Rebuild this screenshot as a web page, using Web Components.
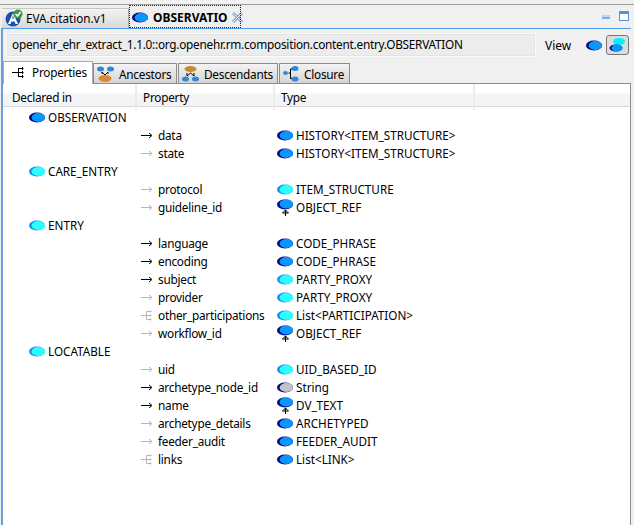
<!DOCTYPE html>
<html>
<head>
<meta charset="utf-8">
<title>OBSERVATION</title>
<style>
    html, body{
        margin: 0;
        height: 100%;
        overflow: hidden;
        background: #f0f0f0;
        color: #000;
        font-family: "Noto Sans", sans-serif;
        font-size: 11.8px;
        letter-spacing: -0.25px;
    }
</style>
</head>
<body>
<template id="icons">
    <svg data-icon="blue" width="17" height="13" viewBox="0 0 17 13"><ellipse cx="8" cy="6.500" rx="8" ry="5" fill="#000a80"/><ellipse cx="9.300" cy="6.500" rx="6.700" ry="4.400" fill="#0a96ff"/></svg>
    <svg data-icon="cyan" width="17" height="13" viewBox="0 0 17 13"><ellipse cx="8" cy="6.500" rx="8" ry="5" fill="#0a96ff"/><ellipse cx="9.300" cy="6.500" rx="6.700" ry="4.400" fill="#2dffff"/></svg>
    <svg data-icon="gray" width="17" height="13" viewBox="0 0 17 13"><ellipse cx="8" cy="6.500" rx="8" ry="5" fill="#000a80"/><ellipse cx="9.300" cy="6.500" rx="6.700" ry="4.400" fill="#c4c4c4"/></svg>
    <svg data-icon="ref" width="17" height="17" viewBox="0 0 17 17"><ellipse cx="8" cy="5.500" rx="8" ry="5" fill="#000a80"/><ellipse cx="9.300" cy="5" rx="6.700" ry="4.600" fill="#0a96ff"/><path d="M8.500 11v6M5.500 14l3-3 3 3z" stroke="#000" fill="none"/></svg>
    <svg data-icon="arrow" width="12" height="7" viewBox="0 0 12 7"><path d="M0 3.500h10M8 1l3 2.500L8 6" fill="none" stroke="currentColor"/></svg>
    <svg data-icon="tree" width="12" height="11" viewBox="0 0 12 11"><path d="M0 5.500h5.500M5.500 1.500v8M5.500 1.500h5M5.500 5.500h5M5.500 9.500h5M9.500 0.500v2M9.500 4.500v2M9.500 8.500v2" fill="none" stroke="currentColor"/></svg>
</template>

<editor-view>
    <editor-tab slot="tabs" label="EVA.citation.v1" icon="globe"></editor-tab>
    <editor-tab slot="tabs" label="OBSERVATIO" icon="blue" active></editor-tab>
    <path-bar>openehr_ehr_extract_1.1.0::org.openehr.rm.composition.content.entry.OBSERVATION</path-bar>
    <view-tabs>
        <view-tab label="Properties" icon="props" active></view-tab>
        <view-tab label="Ancestors" icon="anc"></view-tab>
        <view-tab label="Descendants" icon="desc"></view-tab>
        <view-tab label="Closure" icon="closure"></view-tab>
    </view-tabs>
    <prop-table>
        <class-row icon="blue">OBSERVATION</class-row>
        <prop-row name="data" arrow="dark" icon="blue">HISTORY&lt;ITEM_STRUCTURE&gt;</prop-row>
        <prop-row name="state" arrow="light" icon="blue">HISTORY&lt;ITEM_STRUCTURE&gt;</prop-row>
        <class-row icon="cyan">CARE_ENTRY</class-row>
        <prop-row name="protocol" arrow="light" icon="cyan">ITEM_STRUCTURE</prop-row>
        <prop-row name="guideline_id" arrow="light" icon="ref">OBJECT_REF</prop-row>
        <class-row icon="cyan">ENTRY</class-row>
        <prop-row name="language" arrow="dark" icon="blue">CODE_PHRASE</prop-row>
        <prop-row name="encoding" arrow="dark" icon="blue">CODE_PHRASE</prop-row>
        <prop-row name="subject" arrow="dark" icon="cyan">PARTY_PROXY</prop-row>
        <prop-row name="provider" arrow="light" icon="cyan">PARTY_PROXY</prop-row>
        <prop-row name="other_participations" arrow="tree" icon="cyan">List&lt;PARTICIPATION&gt;</prop-row>
        <prop-row name="workflow_id" arrow="light" icon="ref">OBJECT_REF</prop-row>
        <class-row icon="cyan">LOCATABLE</class-row>
        <prop-row name="uid" arrow="light" icon="cyan">UID_BASED_ID</prop-row>
        <prop-row name="archetype_node_id" arrow="dark" icon="gray">String</prop-row>
        <prop-row name="name" arrow="dark" icon="ref">DV_TEXT</prop-row>
        <prop-row name="archetype_details" arrow="light" icon="blue">ARCHETYPED</prop-row>
        <prop-row name="feeder_audit" arrow="light" icon="blue">FEEDER_AUDIT</prop-row>
        <prop-row name="links" arrow="tree" icon="blue">List&lt;LINK&gt;</prop-row>
    </prop-table>
</editor-view>

<script>
const iconTemplate = document.getElementById("icons");
const iconSvg = name => {
    const found = iconTemplate.content.querySelector(`[data-icon="${name}"]`);
    return found ? found.outerHTML : "";
};
const extraIcons = {
    globe: `<svg width="18" height="18" viewBox="0 0 18 18"><circle cx="8" cy="10" r="7.500" fill="#1c4fa8"/><path d="M8 4L3 15h2.500l1-2.500h3l1 2.500H13z" fill="#fff"/><path d="M7 9.500h2l-1-3z" fill="#1c4fa8"/><circle cx="13" cy="5" r="4.500" fill="#3a9a3a"/><path d="M10.500 5l2 2 3-4" fill="none" stroke="#fff" stroke-width="1.500"/></svg>`,
    props: `<svg width="13" height="11" viewBox="0 0 13 11"><path d="M0 5.500h6M6.500 1v9M6.500 1.500h5M6.500 5.500h5M6.500 9.500h5M10.500 0v3M10.500 4v3M10.500 8v3" fill="none" stroke="#000"/></svg>`,
    anc: `<svg width="17" height="16" viewBox="0 0 17 16"><ellipse cx="3.500" cy="3" rx="3.500" ry="2.500" fill="#2f87d8"/><ellipse cx="13.500" cy="3" rx="3.500" ry="2.500" fill="#2f87d8"/><ellipse cx="8" cy="12.500" rx="6.500" ry="3.500" fill="#d98a2b"/><path d="M5 6l3 3 3-3M5 6v2M11 6v2" fill="none" stroke="#000"/></svg>`,
    desc: `<svg width="17" height="16" viewBox="0 0 17 16"><ellipse cx="8.500" cy="3" rx="6" ry="3" fill="#c98a28"/><ellipse cx="3.500" cy="13" rx="3.500" ry="2.500" fill="#2f87d8"/><ellipse cx="13.500" cy="13" rx="3.500" ry="2.500" fill="#2f87d8"/><path d="M5 10l3.500-3 3.500 3M5 7v3M12 7v3" fill="none" stroke="#000"/></svg>`,
    closure: `<svg width="16" height="16" viewBox="0 0 16 16"><ellipse cx="2.500" cy="7" rx="2.500" ry="2" fill="#2f87d8"/><ellipse cx="12" cy="2.500" rx="3.500" ry="2.500" fill="#2f87d8"/><ellipse cx="12" cy="13" rx="3.500" ry="2.500" fill="#2f87d8"/><path d="M5.500 7H7M7.500 3v9.500M7.500 3H9M7.500 12.500H9" fill="none" stroke="#000"/></svg>`
};

class EditorView extends HTMLElement{
    constructor(){
        super();
        this.attachShadow({mode: "open"});
        this.shadowRoot.innerHTML = `
            <style>
                :host{
                    display: flex;
                    flex-direction: column;
                    box-sizing: border-box;
                    height: 521px;
                    margin-top: 4px;
                    border-top: 1px solid #a0a0a0;
                }
                #strip{
                    display: flex;
                    align-items: flex-end;
                    height: 23px;
                    padding-left: 2px;
                }
                #controls{
                    margin-left: auto;
                    align-self: center;
                    display: flex;
                    align-items: center;
                    gap: 8px;
                    padding-right: 5px;
                }
                #body{
                    flex: 1;
                    margin-left: 1px;
                    margin-right: 3px;
                    border-top: 1px solid #4f9de8;
                    border-left: 2px solid #6a9fdc;
                    display: flex;
                    flex-direction: column;
                    min-height: 0;
                }
            </style>
            <div id="strip">
                <slot name="tabs"></slot>
                <div id="controls">
                    <svg width="9" height="7" viewBox="0 0 9 7"><rect y="2" width="8" height="4" fill="#7fb0ea"/><rect x=".5" y="2.500" width="7" height="1" fill="#fff"/></svg>
                    <svg width="10" height="11" viewBox="0 0 10 11"><rect x=".5" y=".5" width="9" height="9" fill="#fff" stroke="#5a8fd8"/><rect x="1" y="1" width="8" height="2" fill="#5a8fd8"/></svg>
                </div>
            </div>
            <div id="body"><slot></slot></div>
        `;
    }
}

class EditorTab extends HTMLElement{
    connectedCallback(){
        const active = this.hasAttribute("active");
        const icon = this.getAttribute("icon");
        this.attachShadow({mode: "open"});
        this.shadowRoot.innerHTML = `
            <style>
                :host{
                    display: flex;
                    align-items: center;
                    box-sizing: border-box;
                    gap: ${active ? 4 : 3}px;
                    flex: none;
                    height: ${active ? 23 : 20}px;
                    width: ${active ? 112 : 127}px;
                    padding-left: 3px;
                    white-space: nowrap;
                    ${active
                        ? "background:#f0f0f0; outline:1px dotted #222; outline-offset:-1px; font-size:12px; font-weight:700; letter-spacing:0; padding-top:2px;"
                        : "background:linear-gradient(#f4f4f4,#d8d8d8); border-top:1px solid #c8c8c8; border-right:1px solid #aaa; font-size:11.7px; letter-spacing:0; padding-bottom:1px;"}
                }
                svg{flex: none;}
                #close{margin-left: -1px;}
            </style>
            ${icon === "globe" ? extraIcons.globe : iconSvg(icon)}
            <span>${this.getAttribute("label")}</span>
            ${active ? `<svg id="close" width="13" height="13" viewBox="0 0 13 13"><path d="M2 2l9 9M11 2l-9 9" stroke="#7d9fd0" stroke-width="3"/><path d="M2 2l9 9M11 2l-9 9" stroke="#f0f4fa" stroke-width="1"/></svg>` : ""}
        `;
    }
}

class PathBar extends HTMLElement{
    constructor(){
        super();
        this.attachShadow({mode: "open"});
        this.shadowRoot.innerHTML = `
            <style>
                :host{
                    display: flex;
                    align-items: center;
                    height: 32px;
                    padding-left: 3px;
                    box-sizing: border-box;
                    flex: none;
                }
                #path{
                    box-sizing: border-box;
                    flex: none;
                    width: 530px;
                    height: 24px;
                    line-height: 20px;
                    padding-left: 5px;
                    background: #ececec;
                    border: 1px solid #fafafa;
                    border-radius: 2px;
                    box-shadow: 0 0 0 1px #e4e4e4 inset;
                    white-space: nowrap;
                    overflow: hidden;
                }
                #view{margin-left: 9px; width: 32px; flex: none; font-size: 12px; letter-spacing: 0;}
                #first{margin-left: 9px; display: flex; flex: none;}
                #toggle{
                    box-sizing: border-box;
                    flex: none;
                    margin-left: 3px;
                    width: 23px;
                    height: 20px;
                    border: 1px solid #777;
                    border-radius: 3px;
                    background: #dcdcdc;
                    display: grid;
                    place-items: center;
                }
            </style>
            <div id="path"><slot></slot></div>
            <span id="view">View</span>
            <span id="first">${iconSvg("blue")}</span>
            <span id="toggle"><svg width="17" height="16" viewBox="0 0 17 16"><ellipse cx="10" cy="4.500" rx="6" ry="3.500" fill="#00f0ff"/><ellipse cx="7" cy="11" rx="6.500" ry="3.500" fill="#000a80"/><ellipse cx="8" cy="11" rx="5.500" ry="3.500" fill="#0a96ff"/></svg></span>
        `;
    }
}

class ViewTabs extends HTMLElement{
    constructor(){
        super();
        this.attachShadow({mode: "open"});
        this.shadowRoot.innerHTML = `
            <style>
                :host{
                    display: flex;
                    align-items: flex-end;
                    gap: 1px;
                    height: 22px;
                    flex: none;
                    border-bottom: 1px solid #8c8c8c;
                }
            </style>
            <slot></slot>
        `;
    }
}

class ViewTab extends HTMLElement{
    connectedCallback(){
        const active = this.hasAttribute("active");
        const icon = this.getAttribute("icon");
        const widths = {props: 90, anc: 84, desc: 100, closure: 71};
        this.attachShadow({mode: "open"});
        this.shadowRoot.innerHTML = `
            <style>
                :host{
                    display: flex;
                    align-items: center;
                    gap: ${active ? 7 : 5}px;
                    box-sizing: border-box;
                    flex: none;
                    width: ${widths[icon]}px;
                    padding-left: ${active ? 8 : 3}px;
                    white-space: nowrap;
                    ${active
                        ? "height:23px; margin-bottom:-1px; padding-bottom:2px; background:#fff; border:1px solid #a8a8a8; border-bottom:none; z-index:1;"
                        : "height:20px; background:linear-gradient(#f4f4f4,#d4d4d4); border:1px solid #8c8c8c; border-bottom:none;"}
                    ${icon === "anc" ? "margin-left:-1px;" : ""}
                }
                svg{flex: none;}
            </style>
            ${extraIcons[icon]}
            <span>${this.getAttribute("label")}</span>
        `;
    }
}

class PropTable extends HTMLElement{
    constructor(){
        super();
        this.attachShadow({mode: "open"});
        this.shadowRoot.innerHTML = `
            <style>
                :host{
                    display: block;
                    flex: 1;
                    background: #fff;
                    border-right: 1px solid #8c8c8c;
                }
                #head{
                    display: grid;
                    grid-template-columns: 134px 138px 200px 1fr;
                    height: 23px;
                    box-sizing: border-box;
                    background: linear-gradient(#fff 0, #fff 35%, #f2f4f6 50%, #f2f4f6 100%);
                    border-bottom: 1px solid #d8d8d8;
                }
                #head span{
                    padding-left: 6px;
                    line-height: 26px;
                    border-right: 2px solid #ececec;
                }
                #head span:first-child{padding-left: 9px;}
                #rows{padding-top: 1px;}
            </style>
            <div id="head">
                <span>Declared in</span>
                <span>Property</span>
                <span>Type</span>
                <span style="border-right:none"></span>
            </div>
            <div id="rows"><slot></slot></div>
        `;
    }
}

class ClassRow extends HTMLElement{
    connectedCallback(){
        this.attachShadow({mode: "open"});
        this.shadowRoot.innerHTML = `
            <style>
                :host{
                    display: flex;
                    align-items: center;
                    gap: 2px;
                    height: 18px;
                    padding-left: 26px;
                    font-size: 11.7px;
                    letter-spacing: 0;
                }
                svg{flex: none;}
            </style>
            ${iconSvg(this.getAttribute("icon"))}
            <slot></slot>
        `;
    }
}

class PropRow extends HTMLElement{
    connectedCallback(){
        const arrow = this.getAttribute("arrow");
        this.attachShadow({mode: "open"});
        this.shadowRoot.innerHTML = `
            <style>
                :host{
                    display: grid;
                    grid-template-columns: 155px 119px 17px 1fr;
                    align-items: center;
                    height: 18px;
                    white-space: nowrap;
                }
                #mark{
                    display: flex;
                    justify-content: flex-end;
                    padding-right: 5px;
                    color: ${arrow === "dark" ? "#000" : "#b4b4b4"};
                }
                #icon{display: flex;}
                #type{padding-left: 2px; font-size: 11.7px; letter-spacing: 0;}
            </style>
            <span id="mark">${iconSvg(arrow === "tree" ? "tree" : "arrow")}</span>
            <span>${this.getAttribute("name")}</span>
            <span id="icon">${iconSvg(this.getAttribute("icon"))}</span>
            <span id="type"><slot></slot></span>
        `;
    }
}

customElements.define("editor-view", EditorView);
customElements.define("editor-tab", EditorTab);
customElements.define("path-bar", PathBar);
customElements.define("view-tabs", ViewTabs);
customElements.define("view-tab", ViewTab);
customElements.define("prop-table", PropTable);
customElements.define("class-row", ClassRow);
customElements.define("prop-row", PropRow);
</script>
</body>
</html>
